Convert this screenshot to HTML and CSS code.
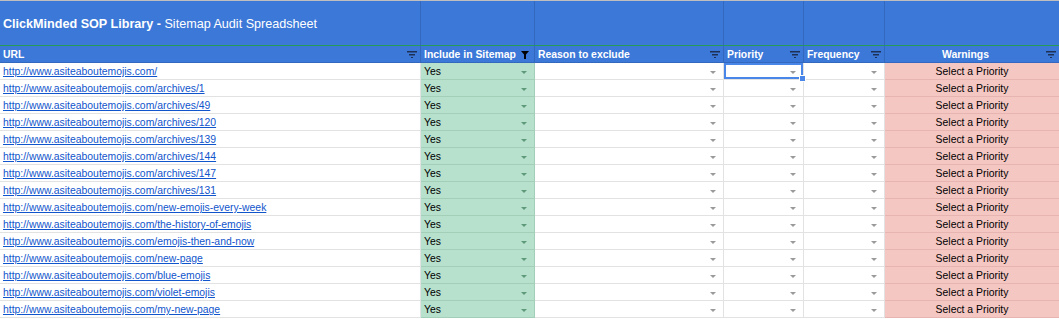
FILE: index.html
```html
<!DOCTYPE html>
<html lang="en">
<head>
    <meta charset="UTF-8">
    <title>Sitemap Audit Spreadsheet</title>
    <link rel="stylesheet" href="styles.css">
</head>
<body>
    <div class="sheet">
        <!-- Linha do título -->
        <div class="row title-row">
            <div class="cell title-cell"><b>ClickMinded SOP Library -</b> Sitemap Audit Spreadsheet</div>
            <div class="cell"></div>
            <div class="cell"></div>
            <div class="cell"></div>
            <div class="cell"></div>
            <div class="cell"></div>
        </div>

        <!-- Cabeçalhos das colunas -->
        <div class="row head-row">
            <div class="cell head">URL<span class="filter"></span></div>
            <div class="cell head">Include in Sitemap<span class="funnel"></span></div>
            <div class="cell head">Reason to exclude<span class="filter"></span></div>
            <div class="cell head">Priority<span class="filter"></span></div>
            <div class="cell head">Frequency<span class="filter"></span></div>
            <div class="cell head center">Warnings<span class="filter"></span></div>
        </div>

        <div id="rows"></div>
    </div>

    <script>
        const urls = [
            "http://www.asiteaboutemojis.com/",
            "http://www.asiteaboutemojis.com/archives/1",
            "http://www.asiteaboutemojis.com/archives/49",
            "http://www.asiteaboutemojis.com/archives/120",
            "http://www.asiteaboutemojis.com/archives/139",
            "http://www.asiteaboutemojis.com/archives/144",
            "http://www.asiteaboutemojis.com/archives/147",
            "http://www.asiteaboutemojis.com/archives/131",
            "http://www.asiteaboutemojis.com/new-emojis-every-week",
            "http://www.asiteaboutemojis.com/the-history-of-emojis",
            "http://www.asiteaboutemojis.com/emojis-then-and-now",
            "http://www.asiteaboutemojis.com/new-page",
            "http://www.asiteaboutemojis.com/blue-emojis",
            "http://www.asiteaboutemojis.com/violet-emojis",
            "http://www.asiteaboutemojis.com/my-new-page"
        ];

        const rows = document.getElementById("rows");

        urls.forEach((url, i) => {
            const row = document.createElement("div");
            row.className = "row data-row";
            const selected = i === 0 ? " selected" : "";
            row.innerHTML =
                `<div class="cell"><a href="#">${url}</a></div>` +
                `<div class="cell yes">Yes<span class="arrow"></span></div>` +
                `<div class="cell"><span class="arrow"></span></div>` +
                `<div class="cell${selected}"><span class="arrow"></span></div>` +
                `<div class="cell"><span class="arrow"></span></div>` +
                `<div class="cell warn">Select a Priority</div>`;
            rows.appendChild(row);
        });
    </script>
</body>
</html>
```

FILE: styles.css
```css
html, body {
    margin: 0;
    padding: 0;
    background: #fff;
    overflow: hidden;
}

.sheet {
    width: 1059px;
    font-family: "Liberation Sans", Arial, sans-serif;
    font-size: 10.4px;
    color: #000;
    border-top: 1px solid #bfbfbf;
}

/* Grade de colunas */
.row {
    display: grid;
    grid-template-columns: 421px 114px 189px 80px 81px 1fr;
}

.cell {
    position: relative;
    box-sizing: border-box;
    height: 17px;
    line-height: 16px;
    padding: 1px 3px 0;
    border-right: 1px solid #e2e2e2;
    border-bottom: 1px solid #e2e2e2;
    white-space: nowrap;
    overflow: visible;
}

.cell:last-child {
    border-right: none;
}

/* Cabeçalho azul */
.title-row .cell {
    height: 45px;
    background: #3c78d8;
    border-right-color: #3368bf;
    border-bottom: 1px solid #279a58;
}

.title-cell {
    color: #fff;
    font-size: 12.6px;
    line-height: 45px;
}

.head-row .cell {
    background: #3c78d8;
    color: #fff;
    font-weight: bold;
    border-right-color: #3368bf;
    border-bottom-color: #3368bf;
}

.center {
    text-align: center;
    padding-right: 16px;
}

/* Ícone de filtro (três linhas) */
.filter {
    position: absolute;
    right: 3px;
    top: 5px;
    width: 10px;
    height: 7px;
    background:
        linear-gradient(#1d3157, #1d3157) 0 0 / 10px 1.5px no-repeat,
        linear-gradient(#1d3157, #1d3157) 2px 3px / 6px 1.5px no-repeat,
        linear-gradient(#1d3157, #1d3157) 4px 6px / 2px 1.5px no-repeat;
}

/* Filtro ativo (funil preto) */
.funnel {
    position: absolute;
    right: 5px;
    top: 5px;
    width: 8px;
    height: 8px;
    background: #000;
    clip-path: polygon(0 0, 100% 0, 62% 45%, 62% 100%, 38% 100%, 38% 45%);
}

/* Linhas de dados */
.data-row a {
    color: #1155cc;
    text-decoration: underline;
}

.yes {
    background: #b7e1cd;
    border-right-color: #a3cfb9;
    border-bottom-color: #a3cfb9;
}

.warn {
    background: #f4c7c3;
    text-align: center;
    border-bottom-color: #e6b5b1;
}

.arrow {
    position: absolute;
    right: 7px;
    top: 8px;
    width: 0;
    height: 0;
    border-left: 3.5px solid transparent;
    border-right: 3.5px solid transparent;
    border-top: 3.5px solid #9a9a9a;
}

.yes .arrow {
    border-top-color: #5e9a7a;
}

/* Célula selecionada */
.selected {
    box-shadow: inset 0 0 0 2px #4a86e8;
}

.selected::after {
    content: "";
    position: absolute;
    right: -3px;
    bottom: -3px;
    width: 5px;
    height: 5px;
    background: #4a86e8;
    border: 1px solid #fff;
    z-index: 2;
}
```
